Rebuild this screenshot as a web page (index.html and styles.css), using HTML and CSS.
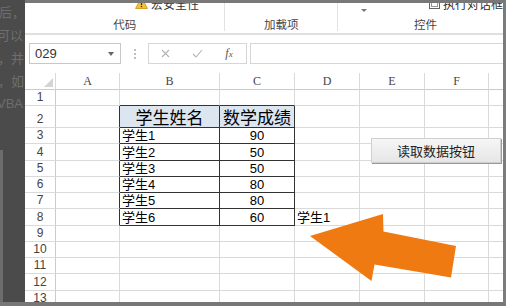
FILE: index.html
```html
<!DOCTYPE html>
<html>
  <head>
    <title>读取数据</title>
    <link rel="stylesheet" href="styles.css">
  </head>
  <body>
    <div class="screen">
      <div class="backdrop">
        <p class="l1">后，</p>
        <p class="l2">可以</p>
        <p class="l3">，并</p>
        <p class="l4">，如</p>
        <p class="l5">VBA</p>
      </div>
      <div class="window">
        <div class="ribbon">
          <div class="group g-code">
            <div class="items">
              <svg class="warn" width="13" height="12" viewBox="0 0 13 12"><path d="M6.5 0.5 L12.5 11.5 L0.5 11.5 Z" fill="#f3c131" stroke="#c9921a" stroke-width="0.8"/><rect x="5.9" y="4" width="1.2" height="4.2" fill="#333"/><rect x="5.9" y="9" width="1.2" height="1.2" fill="#333"/></svg>
              <span>宏安全性</span>
            </div>
            <div class="label">代码</div>
          </div>
          <div class="group g-addin">
            <div class="items"></div>
            <div class="label">加载项</div>
          </div>
          <div class="group g-ctrl">
            <div class="items">
              <span class="tiny-caret"></span>
              <svg class="dlg" width="11" height="11" viewBox="0 0 11 11"><rect x="0.5" y="0.5" width="10" height="10" fill="#fff" stroke="#666"/><rect x="2.5" y="2.5" width="6" height="6" fill="none" stroke="#999"/></svg>
              <span>执行对话框</span>
            </div>
            <div class="label">控件</div>
          </div>
        </div>

        <div class="formula-bar">
          <div class="name-box"><span>029</span><span class="caret"></span></div>
          <span class="dots"></span>
          <div class="fx-buttons">
            <span class="fx-btn"><svg width="9" height="9" viewBox="0 0 9 9"><path d="M1 1 L8 8 M8 1 L1 8" stroke="#b4b4b4" stroke-width="1.1"/></svg></span>
            <span class="fx-btn"><svg width="11" height="9" viewBox="0 0 11 9"><path d="M1 5 L4 8 L10 1" fill="none" stroke="#b4b4b4" stroke-width="1.1"/></svg></span>
            <span class="fx-btn fx">f<sub>x</sub></span>
          </div>
          <div class="formula-input"></div>
        </div>

        <div class="sheet">
          <div class="c h corner"><span class="tri"></span></div><div class="c h">A</div><div class="c h">B</div><div class="c h">C</div><div class="c h">D</div><div class="c h">E</div><div class="c h">F</div><div class="c h"></div>
          <div class="c rh">1</div><div class="c"></div><div class="c t-top"></div><div class="c t-top"></div><div class="c"></div><div class="c"></div><div class="c"></div><div class="c"></div>
          <div class="c rh">2</div><div class="c t-left"></div><div class="c t th">学生姓名</div><div class="c t th">数学成绩</div><div class="c"></div><div class="c"></div><div class="c"></div><div class="c"></div>
          <div class="c rh">3</div><div class="c t-left"></div><div class="c t">学生1</div><div class="c t num">90</div><div class="c"></div><div class="c"></div><div class="c"></div><div class="c"></div>
          <div class="c rh">4</div><div class="c t-left"></div><div class="c t">学生2</div><div class="c t num">50</div><div class="c"></div><div class="c"></div><div class="c"></div><div class="c"></div>
          <div class="c rh">5</div><div class="c t-left"></div><div class="c t">学生3</div><div class="c t num">50</div><div class="c"></div><div class="c"></div><div class="c"></div><div class="c"></div>
          <div class="c rh">6</div><div class="c t-left"></div><div class="c t">学生4</div><div class="c t num">80</div><div class="c"></div><div class="c"></div><div class="c"></div><div class="c"></div>
          <div class="c rh">7</div><div class="c t-left"></div><div class="c t">学生5</div><div class="c t num">80</div><div class="c"></div><div class="c"></div><div class="c"></div><div class="c"></div>
          <div class="c rh">8</div><div class="c t-left"></div><div class="c t">学生6</div><div class="c t num">60</div><div class="c">学生1</div><div class="c"></div><div class="c"></div><div class="c"></div>
          <div class="c rh">9</div><div class="c"></div><div class="c"></div><div class="c"></div><div class="c"></div><div class="c"></div><div class="c"></div><div class="c"></div>
          <div class="c rh">10</div><div class="c"></div><div class="c"></div><div class="c"></div><div class="c"></div><div class="c"></div><div class="c"></div><div class="c"></div>
          <div class="c rh">11</div><div class="c"></div><div class="c"></div><div class="c"></div><div class="c"></div><div class="c"></div><div class="c"></div><div class="c"></div>
          <div class="c rh">12</div><div class="c"></div><div class="c"></div><div class="c"></div><div class="c"></div><div class="c"></div><div class="c"></div><div class="c"></div>
          <div class="c rh">13</div><div class="c"></div><div class="c"></div><div class="c"></div><div class="c"></div><div class="c"></div><div class="c"></div><div class="c"></div>
        </div>
      </div>

      <button class="form-btn">读取数据按钮</button>

      <svg class="arrow" width="506" height="306" viewBox="0 0 506 306">
        <polygon points="310,236 383,214 383.5,231.5 456,246 451,277.5 374.5,264.5 371.5,281" fill="#f07a12"/>
      </svg>
    </div>
  </body>
</html>
```

FILE: styles.css
```css
* {
  box-sizing: border-box;
}
body {
  margin: 0;
  background-color: #4b4b4b;
  font-family: "Liberation Sans", "Noto Sans CJK SC", sans-serif;
}
.screen {
  position: relative;
  display: flex;
  width: 506px;
  height: 306px;
  overflow: hidden;
}

/* page behind the excel window */
.backdrop {
  position: relative;
  width: 25px;
  flex: none;
  overflow: hidden;
  background-color: #4b4b4b;
  border-bottom: 4px solid #777;
  color: #6e6e6e;
  font-family: "Noto Sans CJK SC", sans-serif;
  font-size: 13px;
  line-height: 23px;
}
.backdrop::before {
  content: "";
  position: absolute;
  left: 0;
  top: 150px;
  bottom: 0;
  width: 3px;
  background-color: #6c6c6c;
}
.backdrop p {
  margin: 0;
  white-space: nowrap;
}
.backdrop .l1 { margin-left: -1px; }
.backdrop .l2 { margin-left: -3px; }
.backdrop .l3 { margin-left: -2px; }
.backdrop .l4 { margin-left: -2px; }
.backdrop .l5 { margin-left: -3px; font-family: "Liberation Sans", sans-serif; }

.window {
  flex: 1;
  display: flex;
  flex-direction: column;
  background-color: #fff;
  border-top: 3px solid #787878;
  border-right: 3px solid #7c7c7c;
  border-bottom: 4px solid #777;
  overflow: hidden;
}

/* ribbon */
.ribbon {
  display: flex;
  height: 32px;
  flex: none;
  border-bottom: 2px solid #dfdfdf;
  overflow: hidden;
  font-family: "Noto Sans CJK SC", sans-serif;
  color: #444;
}
.group {
  display: flex;
  flex-direction: column;
  border-right: 1px solid #e2e2e2;
  margin-bottom: 2px;
}
.g-code {
  width: 203px;
}
.g-addin {
  width: 114px;
}
.g-ctrl {
  flex: 1;
  border-right: none;
}
.items {
  display: flex;
  align-items: center;
  height: 16px;
  margin-top: -8px;
  white-space: nowrap;
  font-size: 12px;
  color: #333;
}
.g-code .items {
  padding-left: 110px;
  gap: 3px;
}
.g-ctrl .items {
  padding-left: 23px;
}
.tiny-caret {
  width: 0;
  height: 0;
  margin-top: 14px;
  border-left: 3px solid transparent;
  border-right: 3px solid transparent;
  border-top: 3px solid #777;
}
.dlg {
  margin-left: 62px;
  margin-right: 3px;
}
.label {
  margin-top: 6px;
  line-height: 14px;
  font-size: 11.5px;
  text-align: center;
}
.g-ctrl .label {
  padding-left: 10px;
}

/* formula bar */
.formula-bar {
  display: flex;
  align-items: center;
  height: 38px;
  flex: none;
  padding: 8px 0 9px 4px;
}
.name-box {
  display: flex;
  align-items: center;
  justify-content: space-between;
  width: 92px;
  height: 21px;
  padding: 0 6px 0 5px;
  border: 1px solid #c8c8c8;
  font-size: 13px;
  color: #333;
}
.caret {
  width: 0;
  height: 0;
  border-left: 3px solid transparent;
  border-right: 3px solid transparent;
  border-top: 4px solid #666;
}
.dots {
  width: 2px;
  height: 10px;
  margin: 0 12px 0 13px;
  border-left: 2px dotted #bdbdbd;
}
.fx-buttons {
  display: flex;
  align-items: center;
  width: 99px;
  height: 21px;
  border: 1px solid #d6d6d6;
}
.fx-btn {
  display: flex;
  align-items: center;
  justify-content: center;
  width: 32px;
  height: 19px;
}
.fx {
  font-family: "Liberation Serif", serif;
  font-style: italic;
  font-size: 12px;
  color: #555;
}
.fx sub {
  font-size: 9px;
  vertical-align: -1px;
}
.formula-input {
  flex: 1;
  height: 21px;
  margin-left: 3px;
  border: 1px solid #d6d6d6;
  border-right: none;
}

/* worksheet */
.sheet {
  display: grid;
  grid-template-columns: 31px 64px 100px 75px 65px 65px 64px 14px;
  grid-template-rows: 17px 16px 22px repeat(11, 16.25px);
  flex: 1;
  overflow: hidden;
}
.c {
  display: flex;
  align-items: flex-end;
  padding-left: 2px;
  border-right: 1px solid #dadada;
  border-bottom: 1px solid #dadada;
  font-family: "Liberation Sans", "Noto Sans CJK SC", sans-serif;
  font-size: 13px;
  line-height: 15px;
  color: #000;
  white-space: nowrap;
}
.sheet > div:nth-child(8n) {
  border-right: none;
}
.h {
  align-items: center;
  justify-content: center;
  padding-left: 0;
  border-bottom-color: #cbcbcb;
  font-family: "Liberation Serif", serif;
  font-size: 12px;
  color: #444;
}
.h:first-child,
.h:nth-child(2) {
  border-top: none;
}
.corner {
  align-items: flex-end;
  justify-content: flex-end;
  padding: 0 2px 2px 0;
}
.tri {
  width: 0;
  height: 0;
  border-left: 9px solid transparent;
  border-bottom: 9px solid #d4d4d4;
}
.rh {
  justify-content: center;
  padding-left: 0;
  border-right-color: #cbcbcb;
  font-size: 12px;
  color: #444;
}
.t {
  border-right-color: #333;
  border-bottom-color: #333;
}
.t-top {
  border-bottom-color: #333;
}
.t-left {
  border-right-color: #333;
}
.th {
  align-items: center;
  justify-content: center;
  padding-left: 0;
  background-color: #dce6f1;
  font-family: "Noto Sans CJK SC", sans-serif;
  font-size: 17px;
  line-height: 20px;
}
.num {
  justify-content: center;
  padding-left: 0;
}

/* floating form control and annotation */
.form-btn {
  position: absolute;
  left: 371px;
  top: 138px;
  width: 130px;
  height: 25px;
  padding: 0;
  border: 1px solid #cfcfcf;
  background: linear-gradient(#f6f6f6, #e6e6e6);
  box-shadow: 1px 1px 0 #9a9a9a;
  font-family: "Noto Sans CJK SC", sans-serif;
  font-size: 13px;
  color: #222;
}
.arrow {
  position: absolute;
  left: 0;
  top: 0;
  pointer-events: none;
}
```
